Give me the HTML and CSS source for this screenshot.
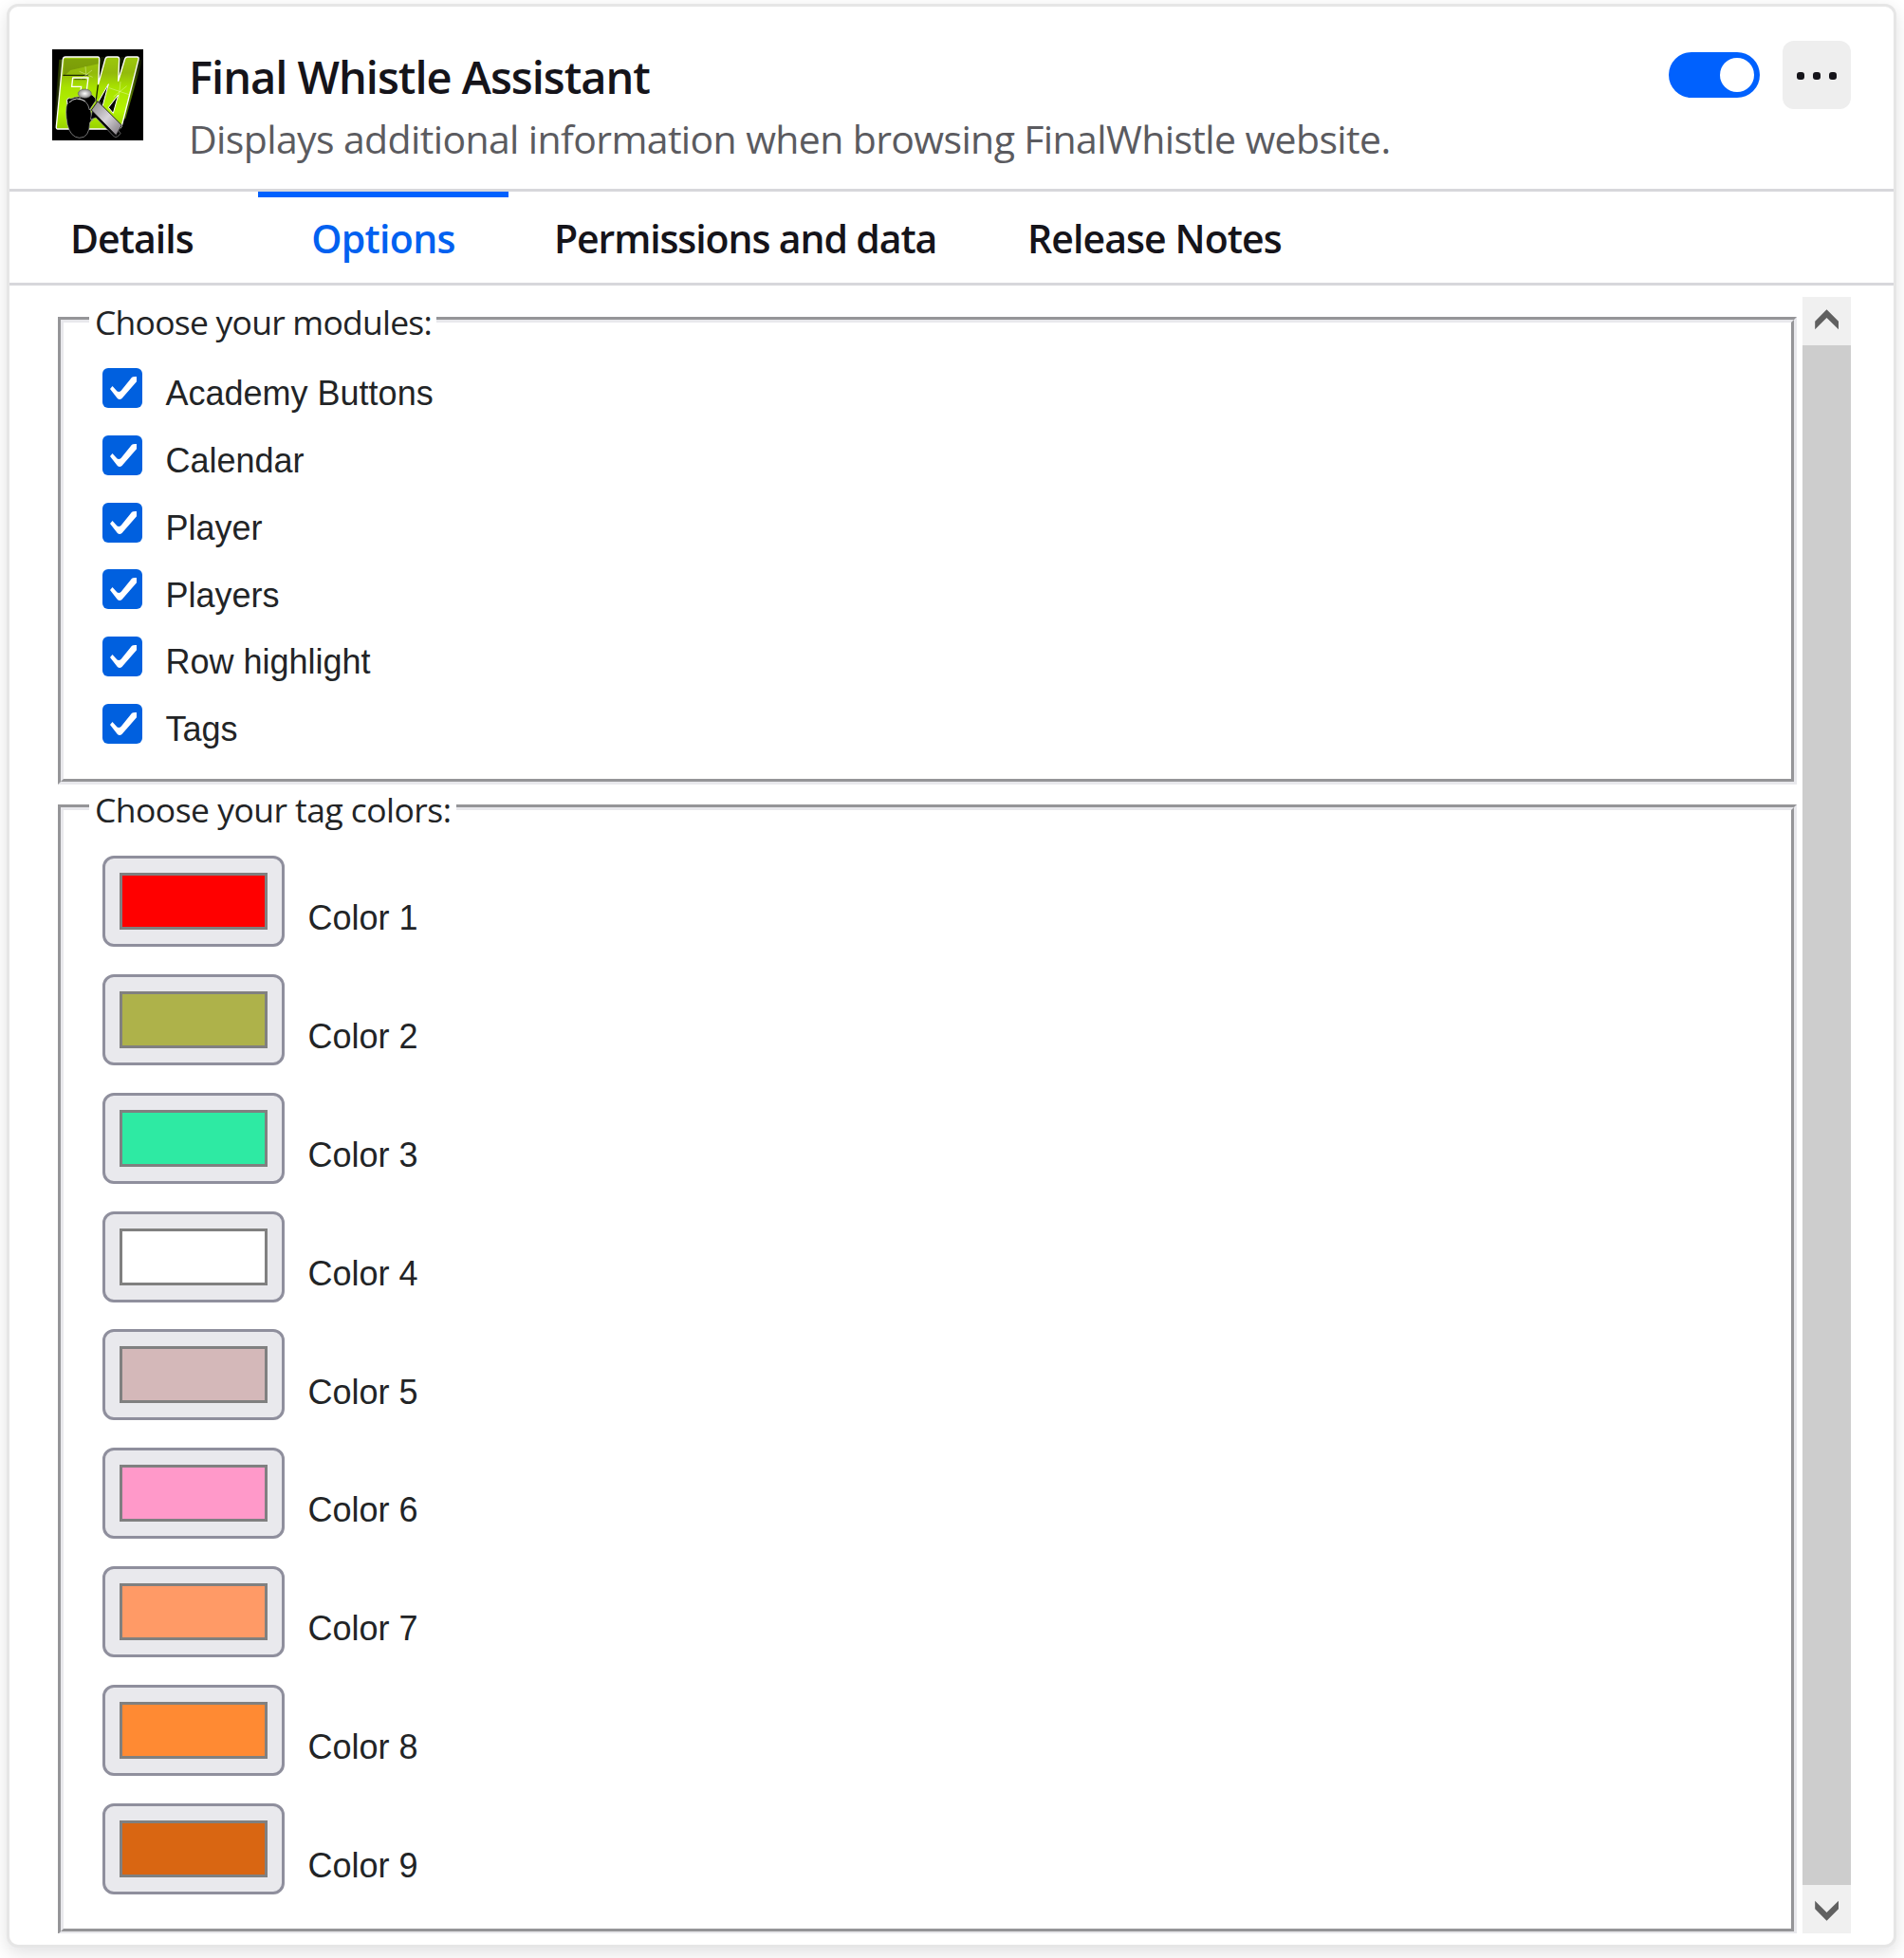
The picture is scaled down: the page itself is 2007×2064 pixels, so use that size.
FILE: index.html
```html
<!DOCTYPE html>
<html lang="en">
<head>
<meta charset="utf-8">
<title>Final Whistle Assistant</title>
<link rel="stylesheet" href="styles.css">
</head>
<body>
<svg width="0" height="0" class="defs">
  <symbol id="tick" viewBox="0 0 42 42"><path d="M8 22 L10.5 19 L15.5 24.5 Q17.5 25.6 19.5 24 L31 9.8 Q32 8.7 36 9 V14.3 L20.5 32 Q18 34 15.8 32 Z"/></symbol>
</svg>
<main class="card">
  <header class="head">
    <svg class="logo" viewBox="12 12 288 288">
      <defs>
        <linearGradient id="lime" x1="0" y1="0" x2="0" y2="1"><stop offset="0" stop-color="#9cc80c"/><stop offset=".22" stop-color="#93ba0c"/><stop offset=".42" stop-color="#a8e200"/><stop offset=".75" stop-color="#b4f400"/><stop offset="1" stop-color="#98d000"/></linearGradient>
        <linearGradient id="glow" x1="0" x2="1"><stop offset="0" stop-color="#6c9600" stop-opacity="0"/><stop offset=".12" stop-color="#6c9600"/><stop offset=".88" stop-color="#6c9600"/><stop offset="1" stop-color="#6c9600" stop-opacity="0"/></linearGradient>
        <linearGradient id="steel" x1="0" y1="0" x2="1" y2="1"><stop offset="0" stop-color="#8a868a"/><stop offset=".5" stop-color="#d8d4da"/><stop offset="1" stop-color="#777277"/></linearGradient>
        <radialGradient id="ball"><stop offset="0" stop-color="#fff"/><stop offset="1" stop-color="#8c8c8c"/></radialGradient>
      </defs>
      <path fill="#000" d="M12 12h288v288H12z"/>
      <path fill="url(#glow)" opacity=".75" d="M34 44 L298 44 L244 232 L16 262 Z"/>
      <path fill="#101600" d="M164 36 H180 L160 122 Z M226 36 H242 L224 94 Z"/>
      <path fill="url(#lime)" stroke="#fff" stroke-width="4" stroke-linejoin="round" d="M54 36 H156 Q162 36 161 44 L158 122 L180 42 Q182 36 188 36 H218 Q224 36 224 43 L221 112 L242 42 Q244 36 250 36 H280 Q287 36 285 44 L234 246 Q231 264 220 264 H30 Q24 264 25 256 L46 43 Q47 36 54 36 Z"/>
      <path fill="#303c00" opacity=".25" d="M48 98 L70 78 L158 58 L157 42 H50 Z"/>
      <path fill="none" stroke="#1d2a00" stroke-width="4" d="M46 94 H127 M157 124 L150 178"/>
      <path fill="none" stroke="#fff" stroke-width="4" d="M76 102 H126 L120 150 M77 102 L74 130 H104 L102 142"/>
      <path fill="none" stroke="#1d2a00" stroke-width="2" d="M82 107 H119"/>
      <path fill="#040600" stroke="#fff" stroke-width="3" d="M190 122 L171 193 L158 178 Z M221 156 L205 214 L190 196 Z"/>
      <g stroke="#f2ffc5" stroke-width="1.5" opacity=".8"><path d="M117 66 L121 108 M98 82 L140 100 M102 106 L138 78 M228 114 L222 172 M192 134 L258 156 M206 162 L248 128"/></g>
      <path fill="#000" stroke="#aaa" stroke-width="2" d="M60 180 Q56 164 72 168 Q96 156 116 168 Q132 178 134 206 L138 236 Q142 240 140 232 L131 244 Q130 292 98 292 Q70 290 60 250 Q52 206 60 180 Z"/>
      <path fill="#000" stroke="#999" stroke-width="2" d="M133 234 L150 228 L208 288 Q216 294 228 278 L160 176 L140 200 Z"/>
      <path fill="#000" stroke="#bbb" stroke-width="2" d="M95 170 L122 146 L140 158 Q152 168 150 174 L130 204 Q124 170 95 170 Z"/>
      <path fill="none" stroke="#ddd" stroke-width="3" d="M60 186 L58 172 L66 164 M66 180 Q88 158 116 176"/>
      <ellipse cx="115" cy="152" rx="21" ry="14" fill="url(#ball)" stroke="#666" stroke-width="2"/>
      <path fill="url(#steel)" stroke="#222" stroke-width="3" d="M156 176 L232 252 L214 284 L136 204 Z"/>
    </svg>
    <div class="titles">
      <h1 class="title">Final Whistle Assistant</h1>
      <p class="desc">Displays additional information when browsing FinalWhistle website.</p>
    </div>
    <span class="toggle"><span class="knob"></span></span>
    <span class="more"><i></i><i></i><i></i></span>
  </header>
  <nav class="tabs">
    <span class="tab details">Details</span>
    <span class="tab options">Options</span>
    <span class="tab permissions">Permissions and data</span>
    <span class="tab release">Release Notes</span>
  </nav>
  <div class="frame">
    <div class="pane">
      <fieldset class="group modules">
        <legend class="legend">Choose your modules:</legend>
        <label class="row"><svg class="check"><use href="#tick"/></svg><span class="name">Academy Buttons</span></label>
        <label class="row"><svg class="check"><use href="#tick"/></svg><span class="name">Calendar</span></label>
        <label class="row"><svg class="check"><use href="#tick"/></svg><span class="name">Player</span></label>
        <label class="row"><svg class="check"><use href="#tick"/></svg><span class="name">Players</span></label>
        <label class="row"><svg class="check"><use href="#tick"/></svg><span class="name">Row highlight</span></label>
        <label class="row"><svg class="check"><use href="#tick"/></svg><span class="name">Tags</span></label>
      </fieldset>
      <fieldset class="group colors">
        <legend class="legend">Choose your tag colors:</legend>
        <label class="row"><span class="well"><span class="swatch" style="background:#ff0000"></span></span><span class="name">Color 1</span></label>
        <label class="row"><span class="well"><span class="swatch" style="background:#aeb24a"></span></span><span class="name">Color 2</span></label>
        <label class="row"><span class="well"><span class="swatch" style="background:#2eeaa3"></span></span><span class="name">Color 3</span></label>
        <label class="row"><span class="well"><span class="swatch" style="background:#ffffff"></span></span><span class="name">Color 4</span></label>
        <label class="row"><span class="well"><span class="swatch" style="background:#d4b8b9"></span></span><span class="name">Color 5</span></label>
        <label class="row"><span class="well"><span class="swatch" style="background:#ff99c9"></span></span><span class="name">Color 6</span></label>
        <label class="row"><span class="well"><span class="swatch" style="background:#ff9a66"></span></span><span class="name">Color 7</span></label>
        <label class="row"><span class="well"><span class="swatch" style="background:#ff8a33"></span></span><span class="name">Color 8</span></label>
        <label class="row"><span class="well"><span class="swatch" style="background:#d96612"></span></span><span class="name">Color 9</span></label>
      </fieldset>
    </div>
    <div class="scrollbar">
      <svg class="arrow" viewBox="0 0 51 51"><path d="M25.5 13.3 L38 25.8 V34.3 L25.5 22 L13.2 34.3 V25.8 Z"/></svg>
      <div class="thumb"></div>
      <svg class="arrow" viewBox="0 0 51 51"><path d="M25.5 37.7 L38 25.2 V16.7 L25.5 29 L13.2 16.7 V25.2 Z"/></svg>
    </div>
  </div>
</main>
</body>
</html>
```
FILE: styles.css
```css
* { box-sizing: border-box; }
body {
  margin: 0;
  height: 2064px;
  padding: 4px 8px 11px 7px;
  overflow: hidden;
  background: #fff;
  font-family: "Open Sans", "Noto Sans", sans-serif;
  color: #15141a;
}
.defs { display: block; }
.card {
  height: 2049px;
  border: 3px solid #e6e6e6;
  border-radius: 12px;
  background: #fff;
  box-shadow: 0 6px 18px rgba(12, 12, 13, .12);
}
.head {
  display: flex;
  align-items: flex-start;
  height: 195px;
  padding: 36px 45px 0;
  border-bottom: 3px solid #d7d7db;
}
.logo { width: 96px; height: 96px; margin-top: 9px; flex: none; }
.titles { flex: 1; margin: 6px 0 0 48px; white-space: nowrap; }
.title { margin: 0 0 1px; font-size: 47px; font-weight: 600; line-height: 64px; letter-spacing: -1px; }
.desc { margin: 0; font-size: 41px; line-height: 64px; letter-spacing: -.63px; color: #5b5b60; }
.toggle {
  display: flex;
  justify-content: flex-end;
  width: 96px;
  height: 48px;
  margin: 12px 24px 0 0;
  padding: 6px;
  border-radius: 24px;
  background: #0061fe;
}
.knob { width: 36px; height: 36px; border-radius: 50%; background: #fff; }
.more {
  display: flex;
  align-items: center;
  justify-content: center;
  gap: 9px;
  width: 72px;
  height: 72px;
  padding-top: 1px;
  border-radius: 12px;
  background: #eee;
}
.more i { width: 8px; height: 8px; border-radius: 3px; background: #15141a; }
.tabs { display: flex; height: 99px; padding-left: 62px; border-bottom: 3px solid #d7d7db; }
.tab { padding-top: 2px; font-size: 41px; font-weight: 600; line-height: 94px; white-space: nowrap; }
.details { width: 200px; padding-left: 2px; letter-spacing: -.95px; }
.options {
  width: 264px;
  padding-top: 0;
  border-top: 6px solid #0061fe;
  line-height: 86px;
  text-align: center;
  letter-spacing: -.68px;
  color: #0061f0;
}
.permissions { width: 546px; padding-left: 48px; letter-spacing: -1.11px; }
.release { padding-left: 1px; letter-spacing: -.92px; }
.frame { display: flex; gap: 6px; height: 1737px; padding: 12px 45px 0 51px; }
.pane { flex: 1; height: 1725px; overflow: hidden; }
.group {
  min-width: 0;
  margin: 0;
  padding: 12.6px 41px 0;
  border: 6px groove #e8e8ec;
  color: #222426;
  font: 36px "Liberation Sans", Arial, sans-serif;
}
.modules { height: 514px; }
.colors { height: 1212px; padding-top: 12.8px; }
.legend {
  height: 48px;
  margin-left: -14px;
  padding: 2px 0 0 6px;
  font: 35.5px/46px "Open Sans", "Noto Sans", sans-serif;
  white-space: nowrap;
}
.modules .legend { width: 366px; letter-spacing: -.77px; }
.colors .legend { width: 387px; letter-spacing: -.54px; }
.legend { padding-top: 3px; }
.row { display: flex; align-items: center; gap: 24.5px; height: 70.8px; line-height: 42px; }
.name { margin-top: 12.6px; }
.colors .row { height: 124.8px; }
.colors .name { margin-top: 36.6px; }
.check { width: 42px; height: 42px; border-radius: 6px; background: #0060df; fill: #fff; }
.well {
  display: flex;
  width: 192px;
  height: 96px;
  padding: 15px;
  border: 3px solid #8f8f9d;
  border-radius: 12px;
  background: #e9e9ed;
}
.swatch { flex: 1; border: 3px solid #808080; }
.scrollbar { display: flex; flex-direction: column; width: 51px; height: 1725px; background: #f0f0f0; }
.arrow { width: 51px; height: 51px; fill: #606060; }
.thumb { flex: 1; background: #cdcdcd; }
```
